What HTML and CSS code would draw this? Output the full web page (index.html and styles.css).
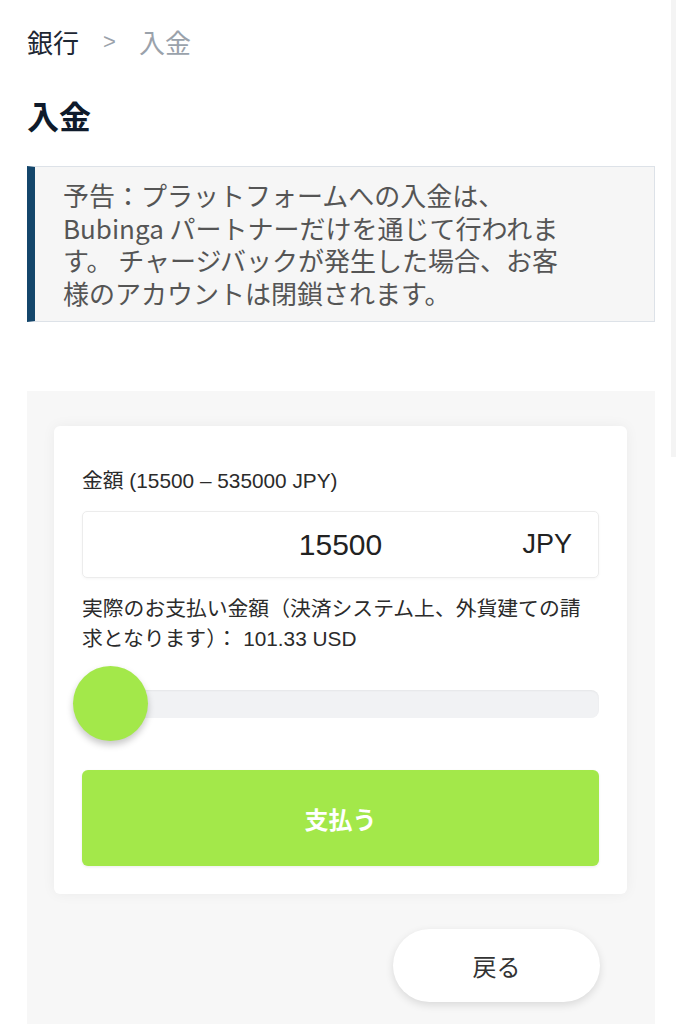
FILE: index.html
```html
<!DOCTYPE html>
<html lang="ja">
<head>
    <meta charset="UTF-8">
    <meta name="viewport" content="width=device-width, initial-scale=1.0">
    <title>入金</title>
    <link rel="stylesheet" href="styles.css">
</head>
<body>
    <div class="page">
        <nav class="breadcrumb">
            <span class="crumb">銀行</span>
            <span class="sep">&gt;</span>
            <span class="crumb current">入金</span>
        </nav>

        <h1 class="title">入金</h1>

        <div class="notice">
            予告：プラットフォームへの入金は、Bubinga パートナーだけを通じて行われます。 チャージバックが発生した場合、お客様のアカウントは閉鎖されます。
        </div>

        <section class="deposit">
            <div class="card">
                <div class="label">金額 (15500 – 535000 JPY)</div>
                <div class="amount">
                    <span></span>
                    <span class="amount-value">15500</span>
                    <span class="amount-cur">JPY</span>
                </div>
                <p class="actual">実際のお支払い金額（決済システム上、外貨建ての請求となります）： 101.33 USD</p>

                <div class="slider">
                    <div class="track"></div>
                    <div class="thumb"></div>
                </div>

                <button class="pay">支払う</button>
            </div>

            <div class="back-row">
                <button class="back">戻る</button>
            </div>
        </section>
    </div>
    <div class="scrollbar"></div>
</body>
</html>
```

FILE: styles.css
```css
body {
    margin: 0;
    padding: 0;
    background-color: #ffffff;
    color: #333;
    font-family: "Noto Sans CJK JP", "Noto Sans", sans-serif;
}
.page {
    padding: 24px 26px 0 27px;
}
.breadcrumb {
    display: flex;
    align-items: center;
    font-size: 26px;
    line-height: 36px;
    color: #1d2733;
}
.sep {
    color: #9aa2ab;
    font-family: "Liberation Sans", sans-serif;
    font-size: 22px;
    margin: 0 23px 0 24px;
}
.crumb.current {
    color: #9aa2ab;
}
.title {
    margin: 35px 0 0;
    font-size: 32px;
    line-height: 40px;
    font-weight: 700;
    color: #0f1b2b;
}
.notice {
    margin-top: 31px;
    background-color: #f6f6f6;
    border: 1px solid #dde2e8;
    border-left: 8px solid #14466b;
    padding: 12px 80px 12px 28px;
    font-size: 26px;
    line-height: 32.5px;
    color: #555;
}
.deposit {
    margin-top: 69px;
    background-color: #f7f7f7;
    padding: 35px 28px 40px 27px;
}
.card {
    background-color: #fff;
    border-radius: 6px;
    box-shadow: 0 0 14px rgba(0,0,0,0.05);
    padding: 40px 28px 28px;
    font-family: "Liberation Sans", "Noto Sans CJK JP", sans-serif;
    color: #2b2b2b;
}
.label {
    font-size: 20.8px;
    line-height: 30px;
}
.amount {
    margin-top: 15px;
    height: 65px;
    border: 1px solid #ececec;
    border-radius: 5px;
    box-shadow: 0 1px 3px rgba(0,0,0,0.04);
    display: grid;
    grid-template-columns: 1fr auto 1fr;
    align-items: center;
    padding: 0 26px;
    color: #222;
}
.amount-value {
    font-size: 30px;
}
.amount-cur {
    justify-self: end;
    font-size: 27px;
}
.actual {
    margin: 16px 0 0;
    font-size: 20.8px;
    line-height: 30px;
}
.slider {
    position: relative;
    margin-top: 12px;
    height: 75px;
    display: flex;
    align-items: center;
}
.track {
    flex: 1;
    height: 28px;
    border-radius: 8px;
    background-color: #f1f2f4;
    box-shadow: inset 0 1px 2px rgba(0,0,0,0.05);
}
.thumb {
    position: absolute;
    left: -9px;
    top: 0;
    width: 75px;
    height: 75px;
    border-radius: 50%;
    background-color: #a3e84a;
    box-shadow: 0 4px 7px rgba(0,0,0,0.22);
}
.pay {
    display: block;
    width: 100%;
    margin-top: 29px;
    height: 96px;
    border: none;
    border-radius: 6px;
    background-color: #a3e84a;
    box-shadow: 0 1px 3px rgba(0,0,0,0.08);
    color: #fff;
    font-family: "Noto Sans CJK JP", sans-serif;
    font-size: 24px;
    font-weight: 700;
}
.back-row {
    display: flex;
    justify-content: flex-end;
    padding: 35px 27px 0 0;
}
.back {
    width: 207px;
    height: 73px;
    border: none;
    border-radius: 37px;
    background-color: #fff;
    box-shadow: 0 3px 8px rgba(0,0,0,0.12);
    color: #333;
    font-family: "Noto Sans CJK JP", sans-serif;
    font-size: 24px;
}
.scrollbar {
    position: fixed;
    top: 0;
    right: 5px;
    width: 5px;
    height: 457px;
    background-color: #f4f4f4;
}
```
